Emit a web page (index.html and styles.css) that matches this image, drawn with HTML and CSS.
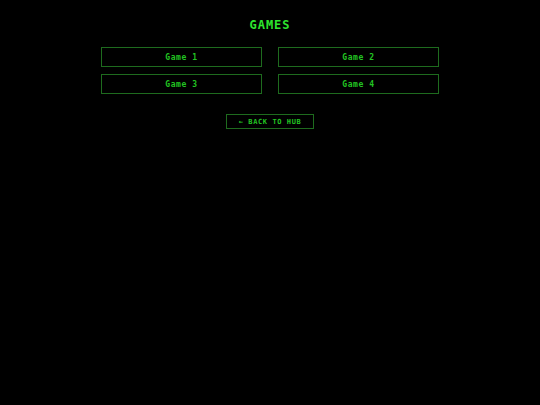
FILE: index.html
```html
<!DOCTYPE html>
<html>
<head>
<meta charset="utf-8">
<link rel="stylesheet" href="styles.css">
</head>
<body>
<main class="page">
  <h1 class="title">GAMES</h1>
  <div class="grid">
    <button class="game">Game 1</button>
    <button class="game">Game 2</button>
    <button class="game">Game 3</button>
    <button class="game">Game 4</button>
  </div>
  <button class="back">← BACK TO HUB</button>
</main>
</body>
</html>
```
FILE: styles.css
```css
html, body {
  margin: 0;
  padding: 0;
  background: #000;
  height: 100%;
}
.page {
  display: flex;
  flex-direction: column;
  align-items: center;
  padding-top: 18px;
  font-family: "DejaVu Sans Mono", "Liberation Mono", monospace;
}
.title {
  margin: 0 0 14px 0;
  color: #2ee62e;
  font-size: 12px;
  font-weight: bold;
  letter-spacing: 1px;
  line-height: 15px;
}
.grid {
  display: grid;
  grid-template-columns: 161px 161px;
  column-gap: 16px;
  row-gap: 7px;
}
.game {
  height: 20px;
  background: #000;
  border: 1px solid #1e6b1e;
  color: #22c422;
  font-family: "DejaVu Sans Mono", "Liberation Mono", monospace;
  font-size: 8px;
  font-weight: bold;
  letter-spacing: 0.6px;
  padding: 0;
}
.back {
  margin-top: 20px;
  width: 88px;
  height: 15px;
  background: #000;
  border: 1px solid #1e6b1e;
  color: #22c422;
  font-family: "DejaVu Sans Mono", "Liberation Mono", monospace;
  font-size: 7px;
  font-weight: bold;
  letter-spacing: 0.6px;
  padding: 0;
}
```
